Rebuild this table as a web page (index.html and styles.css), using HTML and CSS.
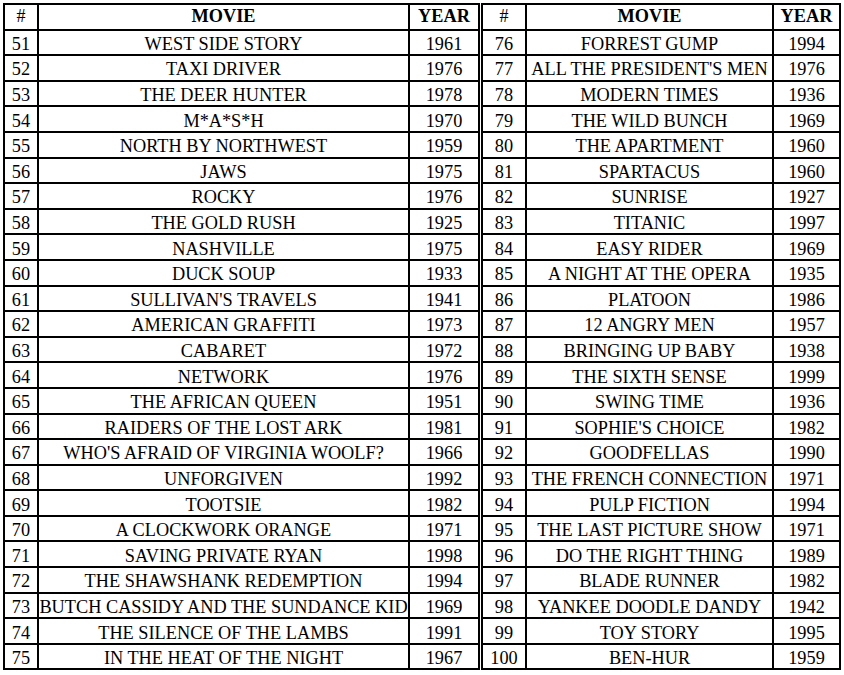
FILE: index.html
```html
<!DOCTYPE html>
<html>
<head>
<meta charset="utf-8">
<link rel="stylesheet" href="styles.css">
</head>
<body>
<div class="wrap">
<table class="tbl left">
<colgroup><col class="c-num"><col class="c-movie"><col class="c-year"></colgroup>
<thead><tr><th class="hnum">#</th><th>MOVIE</th><th>YEAR</th></tr></thead>
<tbody>
<tr><td>51</td><td>WEST SIDE STORY</td><td>1961</td></tr>
<tr><td>52</td><td>TAXI DRIVER</td><td>1976</td></tr>
<tr><td>53</td><td>THE DEER HUNTER</td><td>1978</td></tr>
<tr><td>54</td><td>M*A*S*H</td><td>1970</td></tr>
<tr><td>55</td><td>NORTH BY NORTHWEST</td><td>1959</td></tr>
<tr><td>56</td><td>JAWS</td><td>1975</td></tr>
<tr><td>57</td><td>ROCKY</td><td>1976</td></tr>
<tr><td>58</td><td>THE GOLD RUSH</td><td>1925</td></tr>
<tr><td>59</td><td>NASHVILLE</td><td>1975</td></tr>
<tr><td>60</td><td>DUCK SOUP</td><td>1933</td></tr>
<tr><td>61</td><td>SULLIVAN'S TRAVELS</td><td>1941</td></tr>
<tr><td>62</td><td>AMERICAN GRAFFITI</td><td>1973</td></tr>
<tr><td>63</td><td>CABARET</td><td>1972</td></tr>
<tr><td>64</td><td>NETWORK</td><td>1976</td></tr>
<tr><td>65</td><td>THE AFRICAN QUEEN</td><td>1951</td></tr>
<tr><td>66</td><td>RAIDERS OF THE LOST ARK</td><td>1981</td></tr>
<tr><td>67</td><td>WHO'S AFRAID OF VIRGINIA WOOLF?</td><td>1966</td></tr>
<tr><td>68</td><td>UNFORGIVEN</td><td>1992</td></tr>
<tr><td>69</td><td>TOOTSIE</td><td>1982</td></tr>
<tr><td>70</td><td>A CLOCKWORK ORANGE</td><td>1971</td></tr>
<tr><td>71</td><td>SAVING PRIVATE RYAN</td><td>1998</td></tr>
<tr><td>72</td><td>THE SHAWSHANK REDEMPTION</td><td>1994</td></tr>
<tr><td>73</td><td>BUTCH CASSIDY AND THE SUNDANCE KID</td><td>1969</td></tr>
<tr><td>74</td><td>THE SILENCE OF THE LAMBS</td><td>1991</td></tr>
<tr><td>75</td><td>IN THE HEAT OF THE NIGHT</td><td>1967</td></tr>
</tbody>
</table>
<table class="tbl right">
<colgroup><col class="c-num"><col class="c-movie"><col class="c-year"></colgroup>
<thead><tr><th class="hnum">#</th><th>MOVIE</th><th>YEAR</th></tr></thead>
<tbody>
<tr><td>76</td><td>FORREST GUMP</td><td>1994</td></tr>
<tr><td>77</td><td>ALL THE PRESIDENT'S MEN</td><td>1976</td></tr>
<tr><td>78</td><td>MODERN TIMES</td><td>1936</td></tr>
<tr><td>79</td><td>THE WILD BUNCH</td><td>1969</td></tr>
<tr><td>80</td><td>THE APARTMENT</td><td>1960</td></tr>
<tr><td>81</td><td>SPARTACUS</td><td>1960</td></tr>
<tr><td>82</td><td>SUNRISE</td><td>1927</td></tr>
<tr><td>83</td><td>TITANIC</td><td>1997</td></tr>
<tr><td>84</td><td>EASY RIDER</td><td>1969</td></tr>
<tr><td>85</td><td>A NIGHT AT THE OPERA</td><td>1935</td></tr>
<tr><td>86</td><td>PLATOON</td><td>1986</td></tr>
<tr><td>87</td><td>12 ANGRY MEN</td><td>1957</td></tr>
<tr><td>88</td><td>BRINGING UP BABY</td><td>1938</td></tr>
<tr><td>89</td><td>THE SIXTH SENSE</td><td>1999</td></tr>
<tr><td>90</td><td>SWING TIME</td><td>1936</td></tr>
<tr><td>91</td><td>SOPHIE'S CHOICE</td><td>1982</td></tr>
<tr><td>92</td><td>GOODFELLAS</td><td>1990</td></tr>
<tr><td>93</td><td>THE FRENCH CONNECTION</td><td>1971</td></tr>
<tr><td>94</td><td>PULP FICTION</td><td>1994</td></tr>
<tr><td>95</td><td>THE LAST PICTURE SHOW</td><td>1971</td></tr>
<tr><td>96</td><td>DO THE RIGHT THING</td><td>1989</td></tr>
<tr><td>97</td><td>BLADE RUNNER</td><td>1982</td></tr>
<tr><td>98</td><td>YANKEE DOODLE DANDY</td><td>1942</td></tr>
<tr><td>99</td><td>TOY STORY</td><td>1995</td></tr>
<tr><td>100</td><td>BEN-HUR</td><td>1959</td></tr>
</tbody>
</table>
</div>
</body>
</html>
```
FILE: styles.css
```css
html, body {
  margin: 0;
  padding: 0;
  background: #ffffff;
}
body {
  font-family: "Liberation Serif", "DejaVu Serif", serif;
  color: #000;
}
.wrap {
  display: flex;
  align-items: flex-start;
  gap: 1px;
  padding: 3px 0 0 3px;
}
.tbl {
  border-collapse: collapse;
  table-layout: fixed;
  border: 2px solid #000;
  font-size: 18.3px;
}
.tbl th, .tbl td {
  border: 2px solid #000;
  padding: 0;
  text-align: center;
  vertical-align: middle;
  white-space: nowrap;
  overflow: hidden;
  line-height: 20px;
}
.tbl th {
  font-weight: bold;
  height: 21.6px;
  padding-bottom: 2px;
}
.tbl th.hnum {
  font-weight: normal;
  font-size: 18px;
}
.tbl td {
  padding-top: 3px;
  height: 20.6px;
}
.left { width: 476px; }
.left .c-num { width: 34px; }
.left .c-movie { width: 371px; }
.left .c-year { width: 70px; }
.right { width: 359px; }
.right .c-num { width: 44px; }
.right .c-movie { width: 247px; }
.right .c-year { width: 67px; }
```
